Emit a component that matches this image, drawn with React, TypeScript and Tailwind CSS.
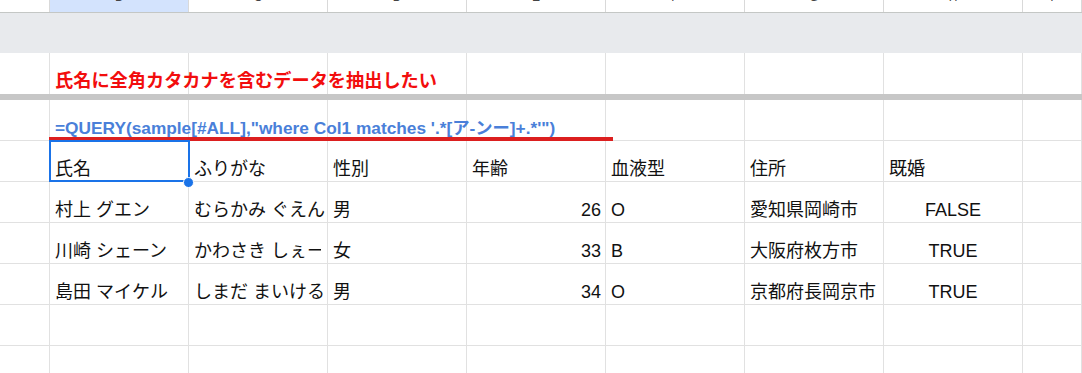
import React from "react";

const FONT = "font-['Liberation_Sans','Noto_Sans_CJK_JP',sans-serif]";

// column widths (incl. right gridline); last column takes the remaining space
const COLS = ["w-[50px]", "w-[139px]", "w-[139px]", "w-[139px]", "w-[139px]", "w-[139px]", "w-[139px]", "w-[139px]"];
const LETTERS = ["A", "B", "C", "D", "E", "F", "G", "H", "I"];

type Align = "left" | "right" | "center";
type CellData = { v: string; a?: Align; clip?: boolean };

const rows: CellData[][] = [
  [{ v: "氏名" }, { v: "ふりがな" }, { v: "性別" }, { v: "年齢" }, { v: "血液型" }, { v: "住所" }, { v: "既婚" }],
  [
    { v: "村上 グエン" },
    { v: "むらかみ ぐえん" },
    { v: "男" },
    { v: "26", a: "right" },
    { v: "O" },
    { v: "愛知県岡崎市" },
    { v: "FALSE", a: "center" },
  ],
  [
    { v: "川崎 シェーン" },
    // overflows into the next cell, which has content, so it's clipped
    { v: "かわさき しぇーん", clip: true },
    { v: "女" },
    { v: "33", a: "right" },
    { v: "B" },
    { v: "大阪府枚方市" },
    { v: "TRUE", a: "center" },
  ],
  [
    { v: "島田 マイケル" },
    { v: "しまだ まいける" },
    { v: "男" },
    { v: "34", a: "right" },
    { v: "O" },
    { v: "京都府長岡京市" },
    { v: "TRUE", a: "center" },
  ],
  [],
  [],
];

const alignClass = (a?: Align) =>
  a === "right" ? "justify-end pr-[4px]" : a === "center" ? "justify-center" : "justify-start pl-[5px]";

const colW = (i: number) => (i < COLS.length ? COLS[i] : "flex-1");

function Cell({ i, c }: { i: number; c?: CellData }) {
  return (
    <div className={`${colW(i)} h-full shrink-0 border-r border-[#e1e1e1] flex items-end pb-[2px] overflow-hidden ${alignClass(c?.a)}`}>
      <span className={`whitespace-nowrap leading-[20px] ${c?.clip ? "max-w-[127px] overflow-hidden" : ""}`}>{c?.v}</span>
    </div>
  );
}

function ColumnHeaders() {
  return (
    <div className="flex h-[13px] border-b border-[#c4c7c5] bg-white overflow-hidden">
      {LETTERS.map((l, i) => (
        <div
          key={l}
          className={`${colW(i)} shrink-0 h-full border-r border-[#d9d9d9] flex justify-center items-start overflow-hidden ${
            i === 1 ? "bg-[#d3e3fd]" : ""
          }`}
        >
          {i > 0 && <span className="text-[12px] leading-[12px] text-[#444] -translate-y-[9px]">{l}</span>}
        </div>
      ))}
    </div>
  );
}

export default function App() {
  return (
    <div className={`w-[1082px] h-[373px] overflow-hidden bg-white text-[18px] text-[#111] ${FONT}`}>
      <ColumnHeaders />

      {/* grey filled band */}
      <div className="h-[40px] bg-[#e8eaed]" />

      {/* title row */}
      <div className="flex h-[41px]">
        {LETTERS.map((l, i) => (
          <div
            key={l}
            className={`${colW(i)} shrink-0 h-full border-r border-[#e1e1e1] flex items-end pb-[2px] pl-[5px] overflow-visible`}
          >
            {i === 1 && (
              <span className="whitespace-nowrap text-[18.2px] leading-[22px] font-bold text-[#f20d0d] relative z-10">
                氏名に全角カタカナを含むデータを抽出したい
              </span>
            )}
          </div>
        ))}
      </div>

      {/* frozen row divider */}
      <div className="h-[6px] bg-[#c7c7c7]" />

      {/* formula row */}
      <div className="relative flex h-[41px] border-b border-[#e1e1e1]">
        {LETTERS.map((l, i) => (
          <div
            key={l}
            className={`${colW(i)} shrink-0 h-full border-r border-[#e1e1e1] flex items-end pb-[2px] pl-[5px]`}
          >
            {i === 1 && (
              <span className="whitespace-nowrap text-[17.3px] leading-[20px] font-bold text-[#4a7fd9] relative z-10">
                =QUERY(sample[#ALL],"where Col1 matches '.*[ア-ンー]+.*'")
              </span>
            )}
          </div>
        ))}
        <div className="absolute left-[49px] top-[37px] w-[564px] h-[4px] bg-[#dc1f1f] z-20" />
      </div>

      {/* data rows */}
      {rows.map((r, ri) => (
        <div key={ri} className="relative flex h-[41px] border-b border-[#e1e1e1]">
          {LETTERS.map((l, i) => (
            <Cell key={l} i={i} c={i > 0 ? r[i - 1] : undefined} />
          ))}
          {ri === 0 && (
            <>
              <div className="absolute left-[49px] top-[-1px] w-[141px] h-[42px] border-2 border-[#1a73e8] z-20" />
              <div className="absolute left-[183px] top-[36px] w-[11px] h-[11px] rounded-full bg-[#1a73e8] border border-white z-30" />
            </>
          )}
        </div>
      ))}
    </div>
  );
}
